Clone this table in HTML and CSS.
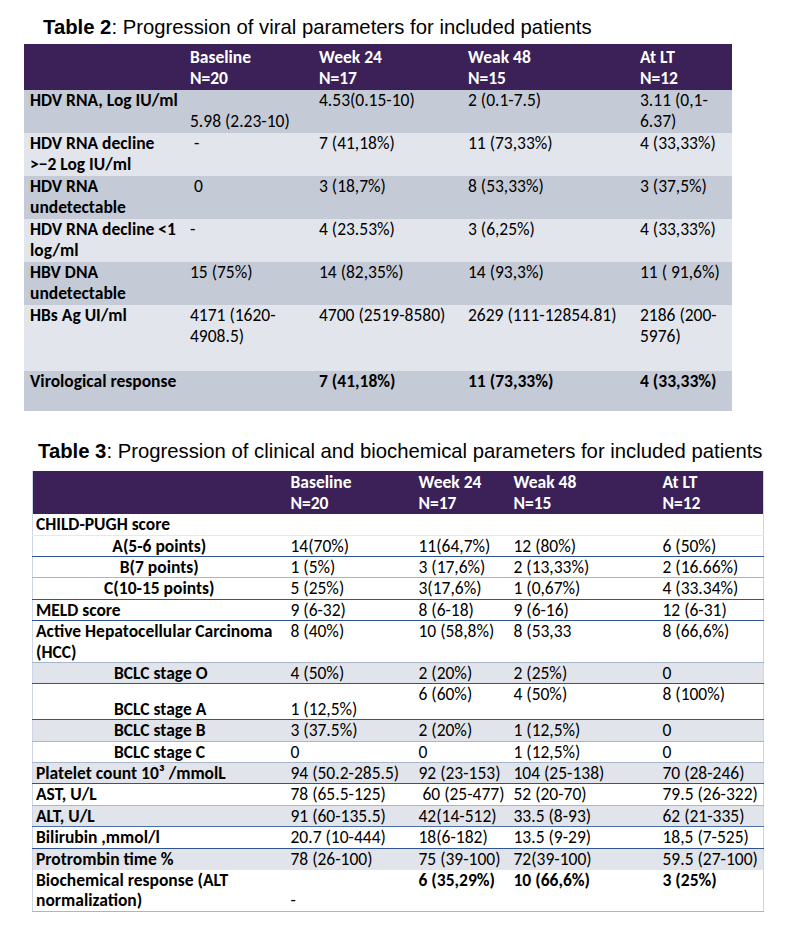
FILE: index.html
```html
<!DOCTYPE html>
<html lang="en">

<head>
    <meta charset="UTF-8">
    <meta name="viewport" content="width=device-width, initial-scale=1.0">
    <title>Tables 2 and 3</title>
    <link rel="stylesheet" href="styles.css">
</head>

<body>
    <!-- Table 2 -->
    <h2 class="caption caption-t2"><b>Table 2</b>: Progression of viral parameters for included patients</h2>
    <table class="viral">
        <colgroup>
            <col class="c-label">
            <col class="c-base">
            <col class="c-w24">
            <col class="c-w48">
            <col class="c-lt">
        </colgroup>
        <thead>
            <tr>
                <th></th>
                <th>Baseline<br>N=20</th>
                <th>Week 24<br>N=17</th>
                <th>Weak 48<br>N=15</th>
                <th>At LT<br>N=12</th>
            </tr>
        </thead>
        <tbody>
            <tr class="dark">
                <td class="label">HDV RNA, Log IU/ml</td>
                <td><br>5.98 (2.23-10)</td>
                <td>4.53(0.15-10)</td>
                <td>2 (0.1-7.5)</td>
                <td>3.11 (0,1-<br>6.37)</td>
            </tr>
            <tr class="light">
                <td class="label">HDV RNA decline<br>&gt;&minus;2 Log IU/ml</td>
                <td>&nbsp;-</td>
                <td>7 (41,18%)</td>
                <td>11 (73,33%)</td>
                <td>4 (33,33%)</td>
            </tr>
            <tr class="dark">
                <td class="label">HDV RNA<br>undetectable</td>
                <td>&nbsp;0</td>
                <td>3 (18,7%)</td>
                <td>8 (53,33%)</td>
                <td>3 (37,5%)</td>
            </tr>
            <tr class="light">
                <td class="label">HDV RNA decline &lt;1<br>log/ml</td>
                <td>-</td>
                <td>4 (23.53%)</td>
                <td>3 (6,25%)</td>
                <td>4 (33,33%)</td>
            </tr>
            <tr class="dark">
                <td class="label">HBV DNA<br>undetectable</td>
                <td>15 (75%)</td>
                <td>14 (82,35%)</td>
                <td>14 (93,3%)</td>
                <td>11 ( 91,6%)</td>
            </tr>
            <tr class="light tall">
                <td class="label">HBs Ag UI/ml</td>
                <td>4171 (1620-<br>4908.5)</td>
                <td>4700 (2519-8580)</td>
                <td>2629 (111-12854.81)</td>
                <td>2186 (200-<br>5976)</td>
            </tr>
            <tr class="dark last">
                <td class="label">Virological response</td>
                <td></td>
                <td class="strong">7 (41,18%)</td>
                <td class="strong">11 (73,33%)</td>
                <td class="strong">4 (33,33%)</td>
            </tr>
        </tbody>
    </table>

    <!-- Table 3 -->
    <h2 class="caption caption-t3"><b>Table 3</b>: Progression of clinical and biochemical parameters for included patients</h2>
    <table class="clinical">
        <colgroup>
            <col class="k-label">
            <col class="k-base">
            <col class="k-w24">
            <col class="k-w48">
            <col class="k-lt">
        </colgroup>
        <thead>
            <tr>
                <th></th>
                <th>Baseline<br>N=20</th>
                <th>Week 24<br>N=17</th>
                <th>Weak 48<br>N=15</th>
                <th>At LT<br>N=12</th>
            </tr>
        </thead>
        <tbody>
            <tr class="line-pale wide">
                <td class="label">CHILD-PUGH score</td>
                <td></td><td></td><td></td><td></td>
            </tr>
            <tr class="line-dark">
                <td class="label sub">A(5-6 points)</td>
                <td>14(70%)</td>
                <td>11(64,7%)</td>
                <td>12 (80%)</td>
                <td>6 (50%)</td>
            </tr>
            <tr class="line-light">
                <td class="label sub">B(7 points)</td>
                <td>1 (5%)</td>
                <td>3 (17,6%)</td>
                <td>2 (13,33%)</td>
                <td>2 (16.66%)</td>
            </tr>
            <tr class="line-dark wide">
                <td class="label sub">C(10-15 points)</td>
                <td>5 (25%)</td>
                <td>3(17,6%)</td>
                <td>1 (0,67%)</td>
                <td>4 (33.34%)</td>
            </tr>
            <tr class="line-dark">
                <td class="label">MELD score</td>
                <td>9 (6-32)</td>
                <td>8 (6-18)</td>
                <td>9 (6-16)</td>
                <td>12 (6-31)</td>
            </tr>
            <tr class="line-light double">
                <td class="label">Active Hepatocellular Carcinoma<br>(HCC)</td>
                <td>8 (40%)</td>
                <td>10 (58,8%)</td>
                <td>8 (53,33</td>
                <td>8 (66,6%)</td>
            </tr>
            <tr class="grey line-dark">
                <td class="label stage">BCLC stage O</td>
                <td>4 (50%)</td>
                <td>2 (20%)</td>
                <td>2 (25%)</td>
                <td>0</td>
            </tr>
            <tr class="line-dark stage-a">
                <td class="label stage bottom">BCLC stage A</td>
                <td class="bottom">1 (12,5%)</td>
                <td>6 (60%)</td>
                <td>4 (50%)</td>
                <td>8 (100%)</td>
            </tr>
            <tr class="grey line-light wide">
                <td class="label stage">BCLC stage B</td>
                <td>3 (37.5%)</td>
                <td>2 (20%)</td>
                <td>1 (12,5%)</td>
                <td>0</td>
            </tr>
            <tr class="line-light">
                <td class="label stage">BCLC stage C</td>
                <td>0</td>
                <td>0</td>
                <td>1 (12,5%)</td>
                <td>0</td>
            </tr>
            <tr class="grey line-dark">
                <td class="label">Platelet count 10³ /mmolL</td>
                <td>94 (50.2-285.5)</td>
                <td>92 (23-153)</td>
                <td>104 (25-138)</td>
                <td>70 (28-246)</td>
            </tr>
            <tr class="line-light wide">
                <td class="label">AST, U/L</td>
                <td>78 (65.5-125)</td>
                <td>&nbsp;60 (25-477)</td>
                <td>52 (20-70)</td>
                <td>79.5 (26-322)</td>
            </tr>
            <tr class="grey line-mid">
                <td class="label">ALT, U/L</td>
                <td>91 (60-135.5)</td>
                <td>42(14-512)</td>
                <td>33.5 (8-93)</td>
                <td>62 (21-335)</td>
            </tr>
            <tr class="line-dark wide">
                <td class="label">Bilirubin ,mmol/l</td>
                <td>20.7 (10-444)</td>
                <td>18(6-182)</td>
                <td>13.5 (9-29)</td>
                <td>18,5 (7-525)</td>
            </tr>
            <tr class="grey">
                <td class="label">Protrombin time %</td>
                <td>78 (26-100)</td>
                <td>75 (39-100)</td>
                <td>72(39-100)</td>
                <td>59.5 (27-100)</td>
            </tr>
            <tr class="line-light double">
                <td class="label">Biochemical response (ALT<br>normalization)</td>
                <td class="bottom">-</td>
                <td class="strong">6 (35,29%)</td>
                <td class="strong">10 (66,6%)</td>
                <td class="strong">3 (25%)</td>
            </tr>
        </tbody>
    </table>
</body>

</html>
```

FILE: styles.css
```css
body {
    margin: 0;
    background-color: white;
    color: black;
    font-family: Carlito, Calibri, Lato, sans-serif;
}

.caption {
    font-family: "Liberation Sans", Arial, sans-serif;
    font-size: 20.3px;
    font-weight: normal;
    line-height: 24px;
    white-space: nowrap;
}

.caption b {
    font-weight: bold;
}

.caption-t2 {
    margin: 15px 0 5px 43px;
}

.caption-t3 {
    margin: 28px 0 8px 38px;
}

table {
    border-collapse: collapse;
    table-layout: fixed;
    font-size: 17.5px;
    line-height: 21px;
}

th, td {
    padding: 0 5px;
    text-align: left;
    vertical-align: top;
    white-space: nowrap;
}

th {
    color: white;
    font-weight: bold;
}

.label {
    font-weight: bold;
}

.strong {
    font-weight: bold;
}

/* Table 2 */
.viral {
    margin-left: 24px;
    width: 708px;
}

.c-label { width: 161px; }
.c-base { width: 129px; }
.c-w24 { width: 149px; }
.c-w48 { width: 172px; }
.c-lt { width: 97px; }

.viral thead tr {
    background-color: #3b2157;
    height: 46px;
}

.viral th {
    padding-top: 3px;
}

.viral .label {
    padding-left: 6px;
}

.viral tbody tr {
    height: 43px;
}

.viral .dark {
    background-color: #c4cad6;
}

.viral .light {
    background-color: #e2e5eb;
}

.viral .tall {
    height: 66px;
}

.viral .last {
    height: 40px;
}

/* Table 3 */
.clinical {
    margin-left: 32px;
    width: 731px;
    border-left: 1px solid #cdd6e2;
    border-right: 1px solid #cdd6e2;
    line-height: 20px;
}

.k-label { width: 255px; }
.k-base { width: 128px; }
.k-w24 { width: 95px; }
.k-w48 { width: 149px; }
.k-lt { width: 104px; }

.clinical thead tr {
    background-color: #3b2157;
    height: 43px;
}

.clinical th {
    padding-top: 1px;
    line-height: 21px;
}

.clinical th, .clinical td {
    padding-left: 3px;
}

.clinical tbody tr {
    height: 21px;
}

.clinical .wide {
    line-height: 21px;
}

.clinical .double {
    line-height: 20.5px;
}

.clinical .grey {
    background-color: #e1e4ea;
}

.clinical .sub {
    text-align: center;
}

.clinical .stage {
    padding-left: 81px;
}

.clinical .stage-a {
    height: 36px;
}

.clinical .bottom {
    vertical-align: bottom;
}

.line-pale td {
    border-bottom: 1px solid #dcecf2;
}

.line-dark td {
    border-bottom: 1px solid #2f5496;
}

.line-mid td {
    border-bottom: 1px solid #4a6ea8;
}

.line-light td {
    border-bottom: 1px solid #a8b6ca;
}
```
